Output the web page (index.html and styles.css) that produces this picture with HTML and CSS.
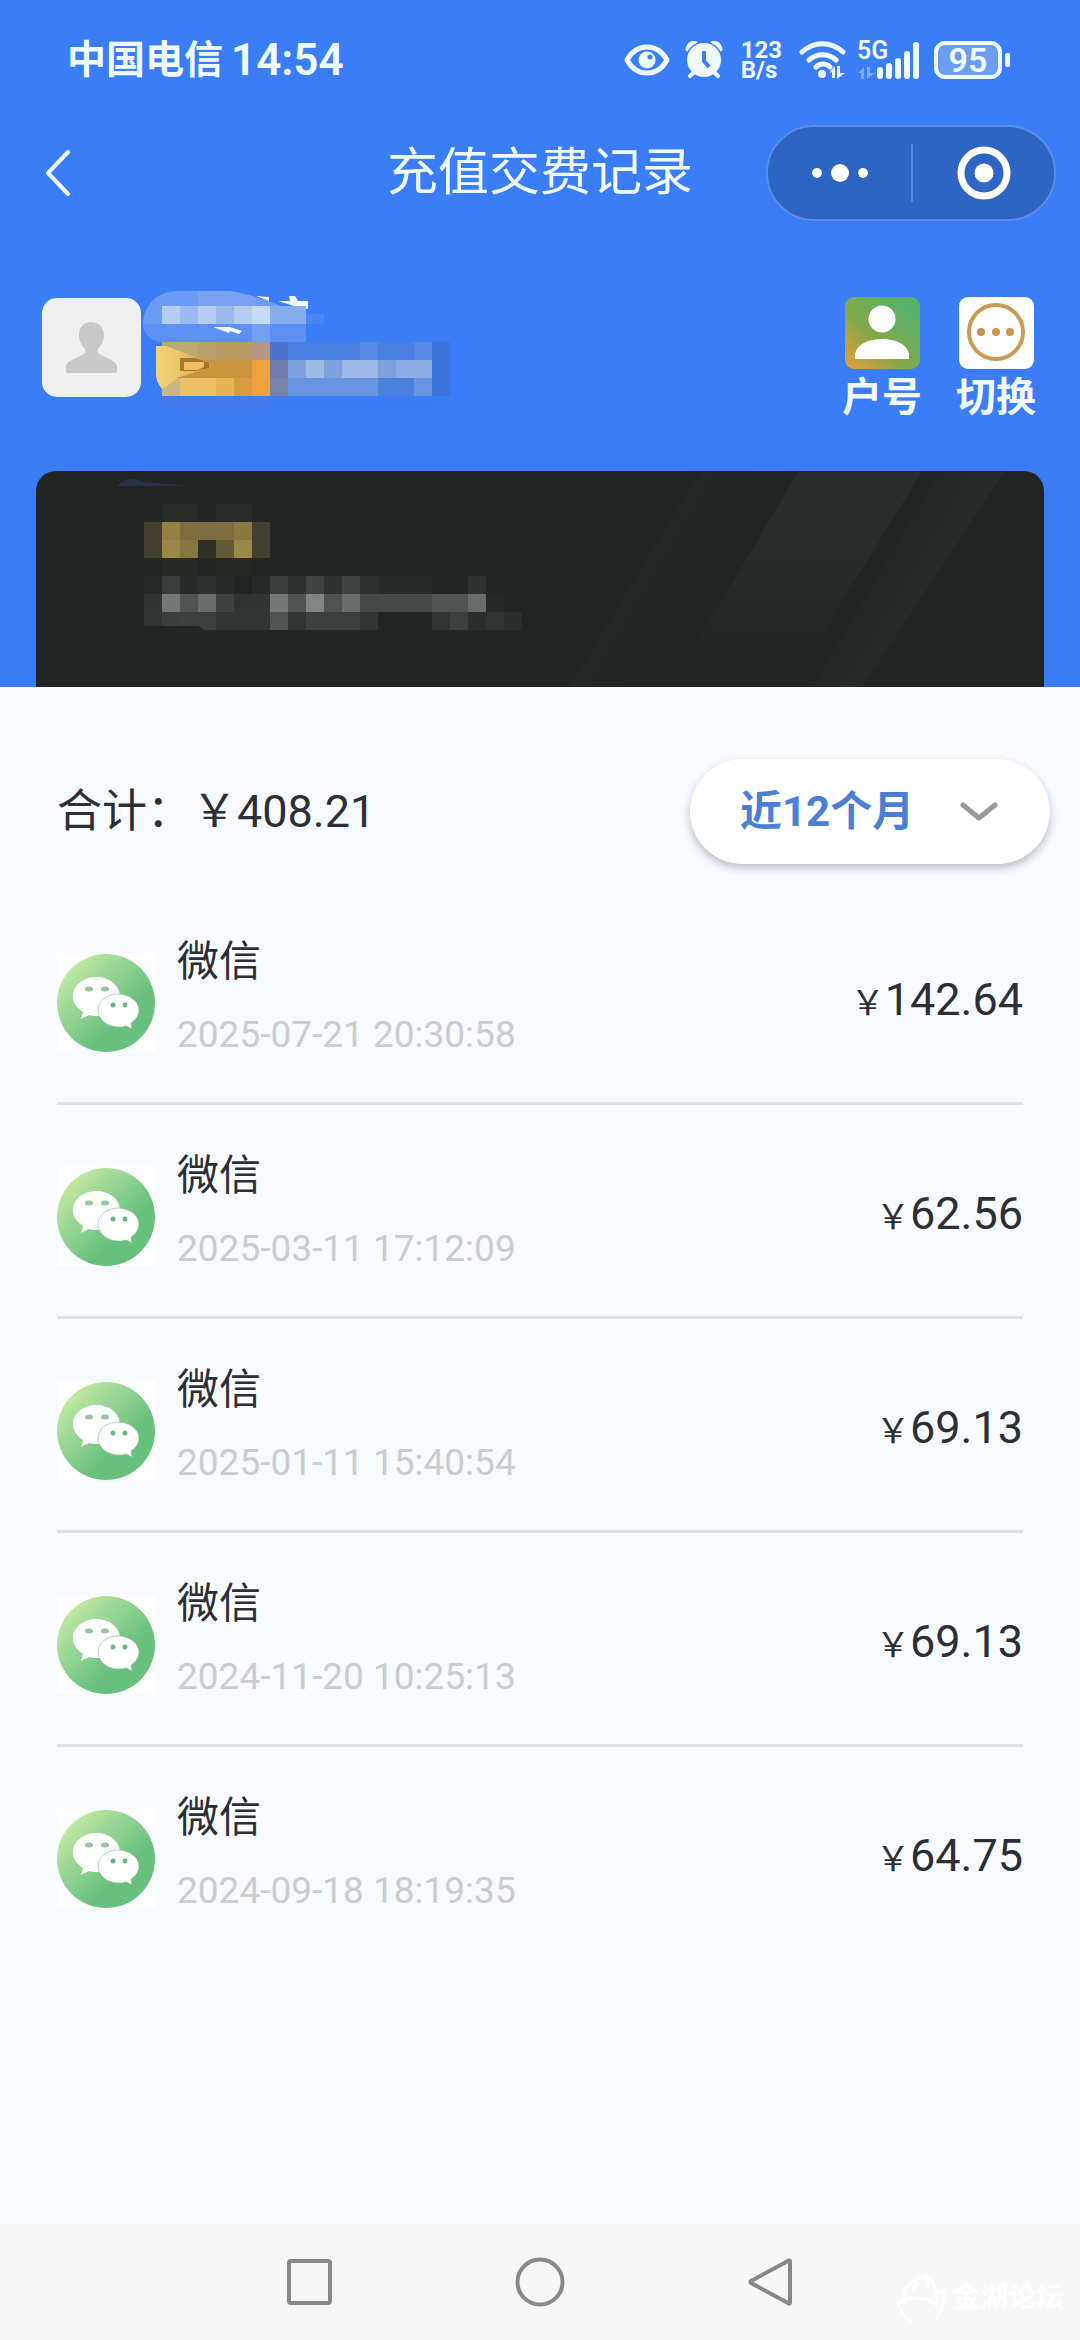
FILE: index.html
```html
<!DOCTYPE html>
<html lang="zh-CN">
<head>
<meta charset="utf-8">
<meta name="viewport" content="width=device-width, initial-scale=1">
<title>充值交费记录</title>
<link rel="stylesheet" href="styles.css">
</head>
<body>
<svg class="defs" aria-hidden="true">
  <defs>
    <linearGradient id="wx" x1="0.1" y1="0.1" x2="0.8" y2="0.8">
      <stop offset="0" stop-color="#c9eca4"/><stop offset="0.35" stop-color="#9bd796"/><stop offset="0.8" stop-color="#67c07c"/>
    </linearGradient>
    <symbol id="wechat" viewBox="0 0 99 99">
      <rect width="99" height="99" fill="#fefefe"/>
      <circle cx="49" cy="50" r="49" fill="url(#wx)"/>
      <path d="M39 24c-13 0-23 9-23 19 0 7 4 12 10 16l-2 7 8-4c3 1 6 1 9 1 13 0 22-9 22-20S52 24 39 24z" fill="#fff"/>
      <ellipse cx="32" cy="36" rx="4" ry="2.500" fill="#8fc79a"/><ellipse cx="48" cy="36" rx="4" ry="2.500" fill="#8fc79a"/>
      <path d="M61 41c-11 0-20 7-20 16s9 17 20 17c3 0 5 0 8-1l6 3-1-6c5-3 8-8 8-13 0-9-10-16-21-16z" fill="#fff" stroke="#8dbb9a" stroke-width="0.700"/>
      <circle cx="56" cy="52" r="2.500" fill="#6fb584"/><circle cx="68" cy="52" r="2.500" fill="#6fb584"/>
    </symbol>
  </defs>
</svg>

<header class="top">
  <div class="status">
    <div class="carrier">中国电信 <span class="clock">14:54</span></div>
    <div class="status-icons">
      <svg class="i-eye" viewBox="0 0 46 32" aria-hidden="true"><path d="M3 16C8 7 15 3 23 3s15 4 20 13c-5 9-12 13-20 13S8 25 3 16z" fill="none" stroke="#eefaff" stroke-width="5" stroke-linejoin="round"/><circle cx="23" cy="16" r="8.500" fill="#eefaff"/><circle cx="26" cy="13" r="2.500" fill="#3b7df7"/></svg>
      <svg class="i-alarm" viewBox="0 0 38 38" aria-hidden="true"><path d="M3 8a7 7 0 0 1 7-6M35 8a7 7 0 0 0-7-6" stroke="#eefaff" stroke-width="5" stroke-linecap="round" fill="none"/><circle cx="19" cy="19" r="18.500" fill="#3b7df7"/><circle cx="19" cy="19" r="17" fill="#eefaff"/><path d="M9 31l-4 4M29 31l4 4" stroke="#eefaff" stroke-width="4" stroke-linecap="round"/><path d="M19 10v10l5 6" fill="none" stroke="#3b7df7" stroke-width="4"/></svg>
      <div class="speed"><span>123</span><span>B/s</span></div>
      <svg class="i-wifi" viewBox="0 0 48 38" aria-hidden="true"><path d="M3 11c12-11 29-11 41 0M10 19c8-7 19-7 27 0M17 26c4-4 10-4 14 0" fill="none" stroke="#eefaff" stroke-width="5" stroke-linecap="round"/><circle cx="23" cy="33" r="4" fill="#eefaff"/><path d="M30 32l6-7v12h-3v-6zM38 25h3v7h5l-8 6z" fill="#eefaff"/></svg>
      <div class="signal">
        <span>5G</span>
        <svg viewBox="0 0 64 38" aria-hidden="true"><path d="M1 32l6-6v12H4v-6zM10 26h3v6h5l-8 6z" fill="#7fabfa"/><path d="M23 29v6M32 25v10M41 20v15M50 13v22M59 4v31" stroke="#eefaff" stroke-width="6" stroke-linecap="round"/></svg>
      </div>
      <div class="battery"><span>95</span></div>
    </div>
  </div>

  <div class="titlebar">
    <button class="back" aria-label="返回"><svg viewBox="0 0 26 46"><path d="M23 2L3 23l20 21" fill="none" stroke="#eefcff" stroke-width="4" stroke-linecap="round" stroke-linejoin="round"/></svg></button>
    <h1>充值交费记录</h1>
    <div class="capsule">
      <button aria-label="更多"><svg viewBox="0 0 58 20"><circle cx="6" cy="10" r="5" fill="#fff"/><circle cx="29" cy="10" r="9" fill="#fff"/><circle cx="52" cy="10" r="5" fill="#fff"/></svg></button>
      <button aria-label="关闭"><svg class="target" viewBox="0 0 54 54"><circle cx="27" cy="27" r="23" fill="none" stroke="#fff" stroke-width="7"/><circle cx="27" cy="27" r="9.500" fill="#fff"/></svg></button>
    </div>
  </div>

  <div class="profile">
    <svg class="avatar" viewBox="0 0 99 99" role="img" aria-label="头像"><rect width="99" height="99" rx="15" fill="#f0f0f0"/><path d="M49 24c-8 0-12 6-12 13 0 6 3 11 6 14 1 3 0 5-3 6-7 4-16 6-16 12v4q0 2 2 2h47q2 0 2-2v-4c0-6-9-8-16-12-3-1-4-3-3-6 3-3 6-8 6-14 0-7-5-13-13-13z" fill="#c8c8c8"/></svg>
    <svg class="masked" viewBox="141 288 324 126" aria-hidden="true">
      <defs><linearGradient id="gold" x1="0" y1="0" x2="1" y2="0"><stop offset="0" stop-color="#f3d57c"/><stop offset="0.500" stop-color="#e6be62"/><stop offset="1" stop-color="#c8953e"/></linearGradient></defs>
      <path d="M143 324c0-12 8-33 35-33h52c25 4 50 13 94 33z" fill="#6a9bf5"/>
      <path d="M143 324h163v18H162c-9 0-19-7-19-18z" fill="#5c90f5"/>
      <path d="M198 291h32l26 6v9h-58z" fill="#79a3f1"/>
      <path d="M256 296l13 1v4zM278 301h12l-1-5h6l3 5h10v8l-14-3z" fill="#f2fbff"/>
      <g shape-rendering="crispEdges">
        <path d="M162 306h18v18h-18zM198 306h18v18h-18zM234 306h18v18h-18z" fill="#b6ccf1"/>
        <path d="M180 306h18v18h-18zM216 306h18v18h-18z" fill="#9bbaee"/>
        <path d="M252 306h18v18h-18z" fill="#c5daf3"/><path d="M270 306h36v18h-36z" fill="#86adee"/><path d="M306 314h18v10h-18z" fill="#4c84f3"/>
        <path d="M252 324h18v18h-18z" fill="#75a1f5"/>
        <path d="M162 342h36v18h-36z" fill="#bba872"/><path d="M198 342h18v18h-18z" fill="#baa16c"/><path d="M216 342h36v18h-36z" fill="#b99c63"/><path d="M252 342h18v18h-18z" fill="#b89686"/>
        <path d="M270 342h18v18h-18z" fill="#4c74cb"/><path d="M288 342h144v18H288z" fill="#487fe1"/><path d="M360 342h18v18h-18zM414 342h18v18h-18z" fill="#5588de"/><path d="M432 342h18v54h-18z" fill="#3f74dd"/>
        <path d="M180 360h72v18h-72z" fill="#c8953e"/><path d="M252 360h18v36h-18z" fill="#eda13f"/><path d="M270 360h18v18h-18z" fill="#6c7ba9"/>
        <path d="M288 360h144v18H288z" fill="#7da2e0"/><path d="M306 360h18v18h-18zM342 360h36v18h-36z" fill="#a0bae7"/><path d="M396 360h36v18h-36z" fill="#8dace4"/>
        <path d="M162 378h18v18h-18z" fill="#c8b888"/><path d="M180 378h36v18h-36z" fill="#ecc065"/><path d="M216 378h18v18h-18z" fill="#e9b254"/><path d="M234 378h18v18h-18z" fill="#db9b41"/><path d="M270 378h18v18h-18z" fill="#7882a6"/>
        <path d="M288 378h144v18H288z" fill="#6794de"/><path d="M378 378h36v18h-36z" fill="#4a80de"/>
        <path d="M162 396h108v14H162z" fill="#447cee"/><path d="M270 396h162v10H270z" fill="#3d7bf2"/>
      </g>
      <path d="M213 327h17l12 4-3 3-9-3-1 2z" fill="#f2fbff"/>
      <path d="M156 346h10l38 14 12 6-36 11-18 12q-6-8-6-14z" fill="url(#gold)"/>
      <path d="M180 358h16l13 5v5l-13 3h-16z" fill="#a7782b"/><path d="M184 362h20v5l-6 3h-14z" fill="#edbf62"/>
    </svg>
    <nav class="actions">
      <button><svg viewBox="0 0 75 72"><defs><linearGradient id="ac" x1="0" y1="0.900" x2="0.800" y2="0.100"><stop offset="0" stop-color="#dd9f3c"/><stop offset="0.450" stop-color="#83a84a"/><stop offset="1" stop-color="#54b06a"/></linearGradient></defs><rect width="75" height="72" rx="9" fill="url(#ac)"/><circle cx="37" cy="22" r="13.500" fill="#fff"/><path d="M10 62V57c2-10 14-15 27-15s25 5 27 15v5z" fill="#fff"/></svg>户号</button>
      <button><svg viewBox="0 0 75 72"><rect width="75" height="72" rx="9" fill="#fff"/><circle cx="37" cy="35" r="27" fill="none" stroke="#cc9a55" stroke-width="4"/><circle cx="22" cy="35" r="4" fill="#c99550"/><circle cx="37" cy="35" r="4" fill="#c99550"/><circle cx="51" cy="35" r="4" fill="#c99550"/></svg>切换</button>
    </nav>
  </div>

  <section class="card" aria-label="会员卡">
    <svg class="shine" viewBox="540 471 504 216" aria-hidden="true">
      <defs><linearGradient id="sh" x1="0" y1="0" x2="0" y2="1"><stop offset="0" stop-color="#2a2d2c"/><stop offset="0.500" stop-color="#272a29"/><stop offset="0.900" stop-color="#222524"/></linearGradient>
      <linearGradient id="sl" x1="0" y1="0.300" x2="0.700" y2="0.700"><stop offset="0" stop-color="#292c2b"/><stop offset="0.700" stop-color="#222524"/></linearGradient>
      <linearGradient id="sr" x1="0.300" y1="0.300" x2="0.600" y2="0.500"><stop offset="0" stop-color="#222524"/><stop offset="1" stop-color="#272a29"/></linearGradient></defs>
      <path d="M701 471h98L680 687H570z" fill="url(#sl)"/>
      <path d="M799 471h123L790 687H670z" fill="url(#sh)"/>
      <path d="M940 471h65L862 687h-50z" fill="url(#sr)"/>
    </svg>
    <svg class="masked-card" viewBox="108 471 432 216" aria-hidden="true">
      <path d="M117 486q8-8 18-7l9 3 24 2 24 2z" fill="#263249"/>
      <g shape-rendering="crispEdges">
        <path d="M162 504h36v18h-36zM216 504h36v18h-36z" fill="#292b27"/>
        <path d="M162 558h36v18h-36zM216 558h36v18h-36z" fill="#262823"/>
        <path d="M144 522h18v36h-18zM252 522h18v36h-18z" fill="#434030"/>
        <path d="M162 522h18v18h-18z" fill="#958044"/><path d="M180 522h54v18h-54z" fill="#7d6d40"/><path d="M234 522h18v18h-18z" fill="#8b7942"/>
        <path d="M162 540h18v18h-18zM234 540h18v18h-18z" fill="#9b8748"/><path d="M180 540h18v18h-18z" fill="#88763f"/><path d="M198 540h18v18h-18z" fill="#2f2f27"/><path d="M216 540h18v18h-18z" fill="#605837"/>
        <path d="M144 576h288v18H144z" fill="#262a29"/><path d="M162 576h18v18h-18zM270 576h18v18h-18z" fill="#393d3c"/><path d="M306 576h18v18h-18zM342 576h18v18h-18z" fill="#404342"/><path d="M198 576h18v18h-18zM288 576h18v18h-18zM324 576h18v18h-18zM360 576h18v18h-18zM468 576h18v18h-18z" fill="#2d3130"/><path d="M234 576h18v18h-18z" fill="#202423"/>
        <path d="M144 594h234v18H144z" fill="#2f3332"/><path d="M180 594h18v18h-18zM288 594h18v18h-18zM324 594h18v18h-18zM432 594h36v18h-36z" fill="#505352"/><path d="M360 594h72v18h-72z" fill="#444746"/>
        <path d="M162 594h18v18h-18zM270 594h18v18h-18z" fill="#747776"/><path d="M306 594h18v18h-18z" fill="#818483"/><path d="M198 594h18v18h-18zM342 594h18v18h-18zM468 594h18v18h-18z" fill="#696c6b"/><path d="M216 594h18v18h-18z" fill="#3d4140"/><path d="M486 594h18v18h-18z" fill="#242827"/>
        <path d="M144 612h234v18H144zM432 612h18v18h-18zM486 612h18v18h-18z" fill="#303433"/><path d="M270 612h18v18h-18z" fill="#505352"/><path d="M180 612h36v18h-36zM306 612h54v18h-54zM450 612h18v18h-18z" fill="#3c3f3e"/><path d="M162 612h18v14h-18z" fill="#3a3d3c"/><path d="M468 612h18v18h-18zM504 612h18v18h-18z" fill="#292d2c"/>
      </g>
      <path d="M144 626h54l8 5h-62z" fill="#222524"/>
    </svg>
  </section>
</header>

<main>
  <div class="summary">
    <p>合计：￥408.21</p>
    <div class="range">
      <select aria-label="时间范围"><option>近12个月</option></select>
      <svg viewBox="0 0 38 20" aria-hidden="true"><path d="M3 3l16 13L35 3" fill="none" stroke="#999" stroke-width="5" stroke-linecap="round" stroke-linejoin="round"/></svg>
    </div>
  </div>
  <ul class="records">
    <li><svg class="logo" aria-hidden="true"><use href="#wechat"/></svg><div class="info"><h2>微信</h2><time>2025-07-21 20:30:58</time></div><p class="amount"><small>￥</small>142.64</p></li>
    <li><svg class="logo" aria-hidden="true"><use href="#wechat"/></svg><div class="info"><h2>微信</h2><time>2025-03-11 17:12:09</time></div><p class="amount"><small>￥</small>62.56</p></li>
    <li><svg class="logo" aria-hidden="true"><use href="#wechat"/></svg><div class="info"><h2>微信</h2><time>2025-01-11 15:40:54</time></div><p class="amount"><small>￥</small>69.13</p></li>
    <li><svg class="logo" aria-hidden="true"><use href="#wechat"/></svg><div class="info"><h2>微信</h2><time>2024-11-20 10:25:13</time></div><p class="amount"><small>￥</small>69.13</p></li>
    <li><svg class="logo" aria-hidden="true"><use href="#wechat"/></svg><div class="info"><h2>微信</h2><time>2024-09-18 18:19:35</time></div><p class="amount"><small>￥</small>64.75</p></li>
  </ul>
</main>

<footer class="sysnav">
  <button aria-label="最近任务"><svg viewBox="0 0 50 50"><rect x="4" y="4" width="41" height="42" rx="2" fill="none" stroke="#888" stroke-width="4"/></svg></button>
  <button aria-label="主屏幕"><svg viewBox="0 0 50 50"><circle cx="25" cy="25" r="22.500" fill="none" stroke="#888" stroke-width="4"/></svg></button>
  <button aria-label="返回"><svg viewBox="0 0 50 50"><path d="M45 4v42q-1 1-2 0L6 26q-1-1 0-2L43 4q1-1 2 0z" fill="none" stroke="#888" stroke-width="4" stroke-linejoin="round"/></svg></button>
  <div class="watermark" aria-hidden="true">
    <svg viewBox="0 0 52 52"><path d="M9 34C5 20 12 8 30 3c8 8 12 16 11 30M9 28c12-4 24-2 32 6M2 32c2 8 6 14 14 18M8 26l-6 6M40 22l8-4c1 12-2 22-9 30M22 10l-6 8M30 3l2 12" fill="none" stroke="#fdfdfd" stroke-width="3"/></svg>
    <span>金湖论坛</span>
  </div>
</footer>
</body>
</html>
```
FILE: styles.css
```css
* { box-sizing: border-box; margin: 0; padding: 0; }

body {
  min-height: 100vh;
  display: flex;
  flex-direction: column;
  background: #f7faff;
  color: #2c2f33;
  font-family: Roboto, "Noto Sans CJK SC", sans-serif;
}

svg { display: block; flex: none; }
button { border: 0; background: none; font: inherit; color: inherit; }
.defs { position: absolute; width: 0; height: 0; }

.top { background: #3b7df7; color: #effbff; }

/* status bar */
.status {
  height: 120px;
  padding: 0 68px 0 67px;
  display: flex;
  align-items: center;
  justify-content: space-between;
}
.carrier { font-size: 39px; font-weight: 700; line-height: 48px; white-space: nowrap; display: flex; align-items: center; gap: 8px; }
.clock { font-size: 44px; font-weight: 600; }
.status-icons { display: flex; align-items: center; gap: 15px; }
.i-eye { width: 46px; height: 32px; }
.i-alarm { width: 38px; height: 38px; }
.speed { margin: 0 2px 0 3px; display: flex; flex-direction: column; font-size: 24px; line-height: 20px; font-weight: 700; }
.i-wifi { width: 48px; height: 38px; }
.signal { position: relative; width: 64px; height: 38px; margin: 0 -2px 0 -5px; }
.signal svg { width: 64px; height: 38px; }
.signal span { position: absolute; left: 0; top: -4px; font-size: 25px; font-weight: 600; line-height: 28px; }
.battery {
  position: relative;
  width: 68px;
  height: 38px;
  margin-right: 10px;
  border: 4px solid #effbff;
  border-radius: 11px;
  background: #6c9df0;
  display: flex;
  align-items: center;
  justify-content: center;
  font-size: 34px;
  font-weight: 600;
  line-height: 30px;
}
.battery::after {
  content: "";
  position: absolute;
  right: -12px;
  top: 8px;
  width: 5px;
  height: 14px;
  border-radius: 2px;
  background: #effbff;
}

/* title bar */
.titlebar {
  height: 105px;
  padding: 0 24px;
  display: grid;
  grid-template-columns: 1fr auto 1fr;
  align-items: center;
}
.back { width: 26px; height: 46px; margin-left: 21px; }
.titlebar h1 { font-size: 51px; font-weight: 400; line-height: 60px; }
.capsule {
  justify-self: end;
  width: 290px;
  height: 96px;
  border: 2px solid #5a8de6;
  border-radius: 48px;
  background: #2e64c3;
  display: grid;
  grid-template-columns: 1fr 1fr;
  align-items: center;
}
.capsule button { height: 58px; display: flex; align-items: center; justify-content: center; }
.capsule button + button { border-left: 2px solid #5286e3; }
.capsule svg { width: 58px; height: 20px; }
.capsule .target { width: 54px; height: 54px; }

/* account row */
.profile { display: flex; align-items: flex-start; padding: 63px 44px 44px 42px; }
.avatar { width: 99px; height: 99px; margin-top: 10px; }
.masked { width: 324px; height: 126px; }
.actions { margin: 9px 0 0 auto; display: flex; gap: 34px; }
.actions button {
  width: 80px;
  display: flex;
  flex-direction: column;
  align-items: center;
  font-size: 40px;
  font-weight: 700;
  line-height: 58px;
  white-space: nowrap;
}
.actions svg { width: 75px; height: 72px; }

.card {
  position: relative;
  margin: 0 36px;
  height: 216px;
  border-radius: 20px 20px 0 0;
  background: #222524;
  overflow: hidden;
}
.shine { position: absolute; right: 0; top: 0; width: 504px; height: 216px; }
.masked-card { width: 432px; height: 216px; margin-left: 72px; }

/* total and period */
.summary {
  display: flex;
  align-items: center;
  justify-content: space-between;
  padding: 72px 30px 27px 57px;
}
.summary p { font-size: 45px; line-height: 60px; }
.range { position: relative; }
.range select {
  display: block;
  appearance: none;
  width: 360px;
  height: 105px;
  padding: 0 100px 0 50px;
  border: 0;
  border-radius: 53px;
  background: #fff;
  box-shadow: 0 4px 8px rgba(0, 0, 0, 0.25);
  color: #4a7fd6;
  font: 700 42px Roboto, "Noto Sans CJK SC", sans-serif;
}
.range svg { position: absolute; right: 52px; top: 43px; width: 38px; height: 20px; pointer-events: none; }

/* payment list */
.records { list-style: none; padding: 0 57px; }
.records li {
  display: flex;
  align-items: center;
  padding: 41px 0 37px;
  border-bottom: 3px solid #dde1e6;
}
.records li:last-child { border-bottom: 0; }
.logo { width: 99px; height: 99px; margin-top: 8px; }
.info { margin-left: 21px; display: flex; flex-direction: column; gap: 13px; }
.info h2 { font-size: 42px; font-weight: 400; line-height: 60px; }
.info time { font-size: 37px; line-height: 60px; color: #cbccce; }
.amount { margin: 6px 0 0 auto; font-size: 45px; line-height: 60px; white-space: nowrap; }
.amount small { font-size: 34px; }

/* system navigation */
.sysnav {
  position: relative;
  margin-top: auto;
  height: 116px;
  padding: 0 18%;
  background: #f7f7f7;
  display: grid;
  grid-template-columns: repeat(3, 1fr);
  align-items: center;
  justify-items: center;
}
.sysnav button svg { width: 50px; height: 50px; }
.watermark {
  position: absolute;
  right: 16px;
  bottom: 16px;
  display: flex;
  align-items: center;
  gap: 4px;
  color: #fdfdfd;
  font-size: 28px;
  font-weight: 700;
  line-height: 52px;
}
.watermark svg { width: 52px; height: 52px; }
```
